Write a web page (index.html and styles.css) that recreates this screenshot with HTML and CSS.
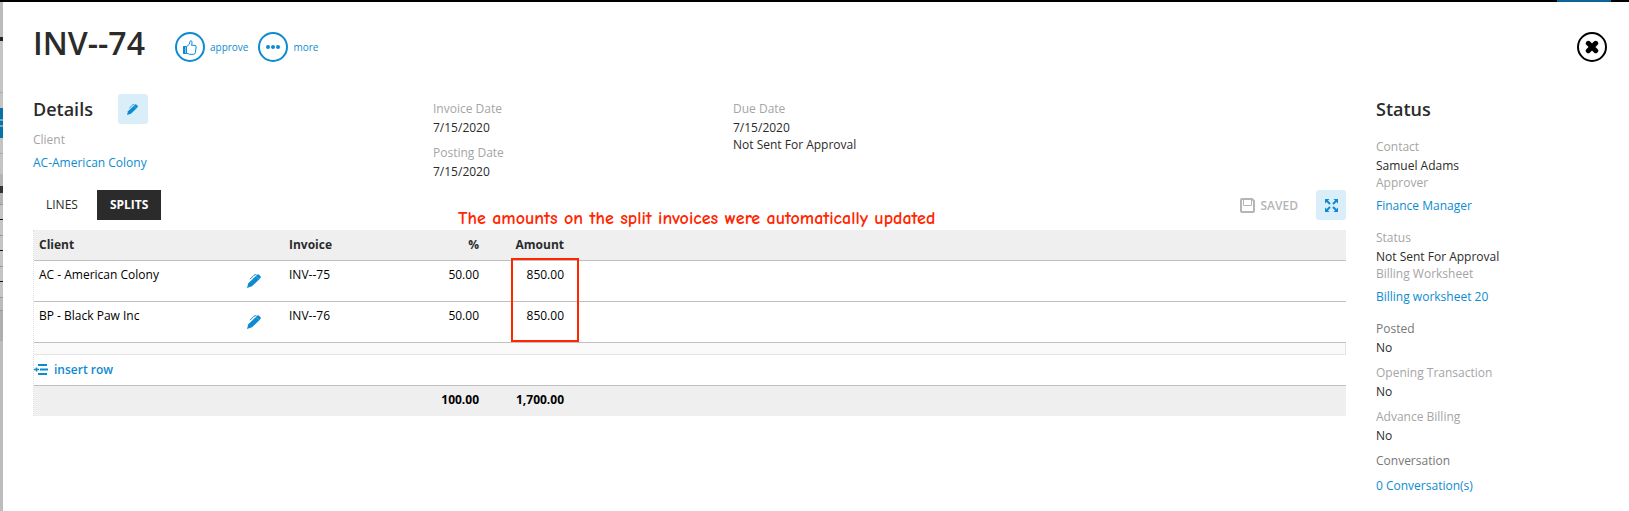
FILE: index.html
```
<!DOCTYPE html>
<html lang="en">
	<head>
		<meta charset="utf-8">
		<title>INV--74</title>
		<meta name="viewport" content="width=device-width, initial-scale=1.0">
		<link rel="stylesheet" href="styles.css">
	</head>
	<body>
		<svg class="sprite" aria-hidden="true">
			<symbol id="pen" viewBox="0 0 14 14">
				<path d="M0 14 1.300 9.200 8.600 2.200 12.300 5.300 5 12.300Z"/>
				<path d="M8.600 2.200 10.500.5Q11.100 0 11.800.5L13.500 2.200Q14.200 3 13.600 3.700L12.300 5.300Z"/>
				<path d="M3 5.200 7 1.200Q8.100.3 9.500.8" fill="none" stroke="currentColor"/>
			</symbol>
		</svg>
		<div class="topbar"><span></span></div>
		<div class="page">
			<div class="behind"></div>
			<section class="panel">
				<header>
					<h1>INV--74</h1>
					<button class="action" type="button">
						<span class="circle">
							<svg width="14" height="15" viewBox="0 0 14 15" fill="none" stroke="currentColor" stroke-linejoin="round">
								<path d="M.6 6.500H3.500V13.500H.6Z"/>
								<path d="M.6 6.500H2V13.500H.6Z" fill="currentColor"/>
								<path d="M3.500 6.800 6.300 4.200 7 1.300Q7.800.2 8.800 1.200 9.500 2.500 8.500 5.300H12Q13.400 5.600 13.200 7L12.300 12.800Q12 14.300 10.700 14.300H6.500L3.500 13"/>
							</svg>
						</span>
						approve
					</button>
					<button class="action" type="button">
						<span class="circle">
							<svg width="14" height="4" viewBox="0 0 14 4" fill="currentColor">
								<circle cx="2" cy="2" r="2"/><circle cx="7" cy="2" r="2"/><circle cx="12" cy="2" r="2"/>
							</svg>
						</span>
						more
					</button>
					<button class="circle close" type="button" aria-label="Close">
						<svg width="14" height="14" viewBox="0 0 14 14" stroke="currentColor" stroke-width="5" stroke-linecap="round">
							<path d="M3.300 3.300 10.700 10.700M10.700 3.300 3.300 10.700"/>
						</svg>
					</button>
				</header>

				<div class="content">
					<main>
						<div class="details">
							<div>
								<div class="heading">
									<h2>Details</h2>
									<button class="square" type="button" aria-label="Edit details"><svg class="icon-small"><use href="#pen"/></svg></button>
								</div>
								<dl>
									<dt>Client</dt>
									<dd class="link"><a href="#">AC-American Colony</a></dd>
								</dl>
							</div>
							<dl class="dates">
								<dt>Invoice Date</dt>
								<dd>7/15/2020</dd>
								<dt>Posting Date</dt>
								<dd>7/15/2020</dd>
							</dl>
							<dl class="dates">
								<dt>Due Date</dt>
								<dd class="tight">7/15/2020</dd>
								<dd>Not Sent For Approval</dd>
							</dl>
						</div>

						<div class="toolbar">
							<button class="tab" type="button">LINES</button>
							<button class="tab active" type="button">SPLITS</button>
							<span class="saved">
								<svg width="15" height="15" viewBox="0 0 15 15" fill="none" stroke="currentColor">
									<path d="M1 2Q1 1 2 1H12L14 3V13Q14 14 13 14H2Q1 14 1 13Z" stroke-width="2"/>
									<path d="M3.500 1V7.500H11.500V1"/>
								</svg>
								SAVED
							</span>
							<button class="square" type="button" aria-label="Full screen">
								<svg width="13" height="13" viewBox="0 0 13 13" fill="currentColor" stroke="currentColor">
									<path d="M0 0H4.500L0 4.500ZM13 0V4.500L8.500 0ZM0 13V8.500L4.500 13ZM13 13H8.500L13 8.500Z" stroke="none"/>
									<path d="M1 1 5 5M12 1 8 5M1 12 5 8M12 12 8 8" stroke-width="2"/>
								</svg>
							</button>
						</div>

						<div class="splits">
							<table>
								<colgroup>
									<col class="col-client"><col class="col-edit"><col class="col-invoice"><col class="col-percent"><col class="col-amount"><col>
								</colgroup>
								<thead>
									<tr><th colspan="2">Client</th><th>Invoice</th><th class="num">%</th><th class="num">Amount</th><th></th></tr>
								</thead>
								<tbody>
									<tr>
										<td>AC - American Colony</td>
										<td class="edit"><button type="button" aria-label="Edit AC"><svg class="icon"><use href="#pen"/></svg></button></td>
										<td>INV--75</td>
										<td class="num">50.00</td>
										<td class="num">850.00</td>
										<td></td>
									</tr>
									<tr>
										<td>BP - Black Paw Inc</td>
										<td class="edit"><button type="button" aria-label="Edit BP"><svg class="icon"><use href="#pen"/></svg></button></td>
										<td>INV--76</td>
										<td class="num">50.00</td>
										<td class="num">850.00</td>
										<td></td>
									</tr>
									<tr class="spacer"><td colspan="6"></td></tr>
									<tr class="insert">
										<td colspan="6">
											<button type="button">
												<svg width="14" height="11" viewBox="0 0 14 11" fill="none" stroke="currentColor" stroke-width="2">
													<path d="M4 1H13M6 5.500H14M4 10H13"/>
													<path d="M0 5.500H5M2.500 3.500V7.500" stroke-width="1.500"/>
												</svg>
												insert row
											</button>
										</td>
									</tr>
								</tbody>
								<tfoot>
									<tr><td colspan="3"></td><td class="num">100.00</td><td class="num">1,700.00</td><td></td></tr>
								</tfoot>
							</table>
							<p class="note">The amounts on the split invoices were automatically updated</p>
							<div class="highlight"></div>
						</div>
					</main>

					<aside>
						<h2>Status</h2>
						<dl>
							<dt>Contact</dt>
							<dd class="tight">Samuel Adams</dd>
							<dt>Approver</dt>
							<dd class="link"><a href="#">Finance Manager</a></dd>
							<dt>Status</dt>
							<dd class="tight">Not Sent For Approval</dd>
							<dt>Billing Worksheet</dt>
							<dd class="link"><a href="#">Billing worksheet 20</a></dd>
							<dt class="dark">Posted</dt>
							<dd>No</dd>
							<dt>Opening Transaction</dt>
							<dd>No</dd>
							<dt>Advance Billing</dt>
							<dd>No</dd>
							<dt class="dark">Conversation</dt>
							<dd class="link last"><a href="#">0 Conversation(s)</a></dd>
						</dl>
					</aside>
				</div>
			</section>
		</div>
	</body>
</html>
```
FILE: styles.css
```
* {
	box-sizing: border-box;
	margin: 0;
	padding: 0;
}
body {
	min-height: 100vh;
	display: flex;
	flex-direction: column;
	font-family: 'Open Sans', sans-serif;
	font-size: 12px;
	line-height: 17px;
	color: #2b2b2b;
	background: white;
}
button {
	font: inherit;
	color: inherit;
	background: none;
	border: none;
	cursor: pointer;
}
a {
	color: #0d8bd1;
	text-decoration: none;
}
.sprite {
	display: none;
}

.topbar {
	display: flex;
	justify-content: flex-end;
	height: 2px;
	padding-right: 18px;
	background: black;
}
.topbar span {
	width: 54px;
	background: #0b6496;
}
.page {
	flex: 1;
	display: flex;
}

/* edge of the list that stays visible under the panel */
.behind {
	width: 3px;
	background: linear-gradient(
		#bbb 35px, #222 35px 39px, #c4c4c4 39px 90px, #aaa 90px 91px, #c4c4c4 91px 106px,
		#0871a8 106px 117px, #6aa9cb 117px 119px, #0871a8 119px 123px, #6aa9cb 123px 125px, #0871a8 125px 136px,
		#c4c4c4 136px 151px, #aaa 151px 152px, #c4c4c4 152px 172px, #b4b4b4 172px 184px,
		#333 184px 191px, #b4b4b4 191px 202px, #999 202px 203px, #c4c4c4 203px 217px,
		#111 217px 218px, #c4c4c4 218px 233px, #999 233px 234px, #c4c4c4 234px 248px,
		#111 248px 249px, #c4c4c4 249px 264px, #999 264px 265px, #c4c4c4 265px 279px,
		#111 279px 280px, #c4c4c4 280px 295px, #999 295px 296px, #bbb 296px 308px,
		#999 308px 309px, #aeaeae 309px 339px, #bdbdbd 339px
	);
}

.panel {
	flex: 1;
	padding: 20px 22px 0 30px;
}
header {
	display: flex;
	align-items: flex-end;
	height: 40px;
}
h1 {
	margin-right: 30px;
	font-size: 32px;
	line-height: 38px;
	font-weight: 600;
}
h2 {
	font-size: 18px;
	line-height: 30px;
	font-weight: 600;
}
.action {
	display: flex;
	align-items: center;
	gap: 5px;
	margin-right: 10px;
	font-size: 10px;
	color: #0d8bd1;
}
.circle {
	display: flex;
	align-items: center;
	justify-content: center;
	width: 30px;
	height: 30px;
	border: 2px solid;
	border-radius: 50%;
}
.close {
	margin-left: auto;
	color: black;
}

.content {
	display: grid;
	grid-template-columns: 1fr 231px;
	gap: 30px;
	margin-top: 32px;
}
.details {
	display: grid;
	grid-template-columns: 400px 300px 1fr;
}
.heading {
	display: flex;
	gap: 25px;
	margin-bottom: 7px;
}
.square {
	display: flex;
	align-items: center;
	justify-content: center;
	width: 30px;
	height: 30px;
	border-radius: 3px;
	color: #0d8bd1;
	background: #daeefa;
}
.icon {
	display: block;
	width: 14px;
	height: 14px;
	fill: currentColor;
}
.icon-small {
	width: 11px;
	height: 11px;
	fill: currentColor;
}
.dates {
	padding-top: 6px;
}
dt {
	margin-bottom: 2px;
	color: #a5a5a5;
}
dt.dark {
	color: #777;
}
dd {
	margin-bottom: 8px;
}
dd.tight {
	margin-bottom: 0;
}
dd.link {
	padding-top: 4px;
	margin-bottom: 15px;
}
dd.last {
	padding-top: 6px;
}

.toolbar {
	display: flex;
	align-items: center;
	gap: 6px;
	margin: 2px 0 10px;
}
.tab {
	height: 30px;
	padding: 0 13px 1px;
}
.tab.active {
	font-weight: 700;
	color: white;
	background: #2b2b2b;
}
.saved {
	display: flex;
	align-items: center;
	gap: 6px;
	margin: 0 12px 0 auto;
	font-weight: 600;
	color: #b5b5b5;
}

.splits {
	position: relative;
}
table {
	width: 100%;
	table-layout: fixed;
	border-spacing: 0;
	border-left: 1px dotted #ddd;
}
.col-client {
	width: 208px;
}
.col-edit {
	width: 42px;
}
.col-invoice {
	width: 100px;
}
.col-percent {
	width: 101px;
}
.col-amount {
	width: 85px;
}
th {
	height: 31px;
	padding: 0 6px 2px 5px;
	text-align: left;
	font-weight: 700;
	background: #efefef;
	border-bottom: 1px solid #bfbfbf;
}
td {
	height: 41px;
	padding: 5px 6px 0 5px;
	vertical-align: top;
	color: black;
	border-bottom: 1px solid #bfbfbf;
}
.num {
	text-align: right;
}
.edit {
	color: #0d8bd1;
	padding-top: 13px;
}
.spacer td {
	height: 12px;
	padding: 0;
	background: #fafafa;
	border-right: 1px solid #e5e5e5;
	border-bottom-color: #e5e5e5;
}
.insert td {
	height: 31px;
	padding: 0 0 2px;
	vertical-align: middle;
}
.insert button {
	display: flex;
	align-items: center;
	gap: 6px;
	font-weight: 600;
	color: #0d8bd1;
}
tfoot td {
	height: 30px;
	font-weight: 700;
	background: #efefef;
	border-bottom: none;
}

/* annotations drawn over the table */
.note {
	position: absolute;
	top: -21px;
	left: 425px;
	font-family: 'Comic Sans MS', 'Comic Neue', Lato, sans-serif;
	font-size: 18px;
	line-height: 20px;
	font-weight: 700;
	color: #ff2600;
	white-space: nowrap;
}
.highlight {
	position: absolute;
	top: 28px;
	left: 478px;
	width: 68px;
	height: 84px;
	border: 2px solid #ff2600;
}

aside dl {
	margin-top: 14px;
}
```
